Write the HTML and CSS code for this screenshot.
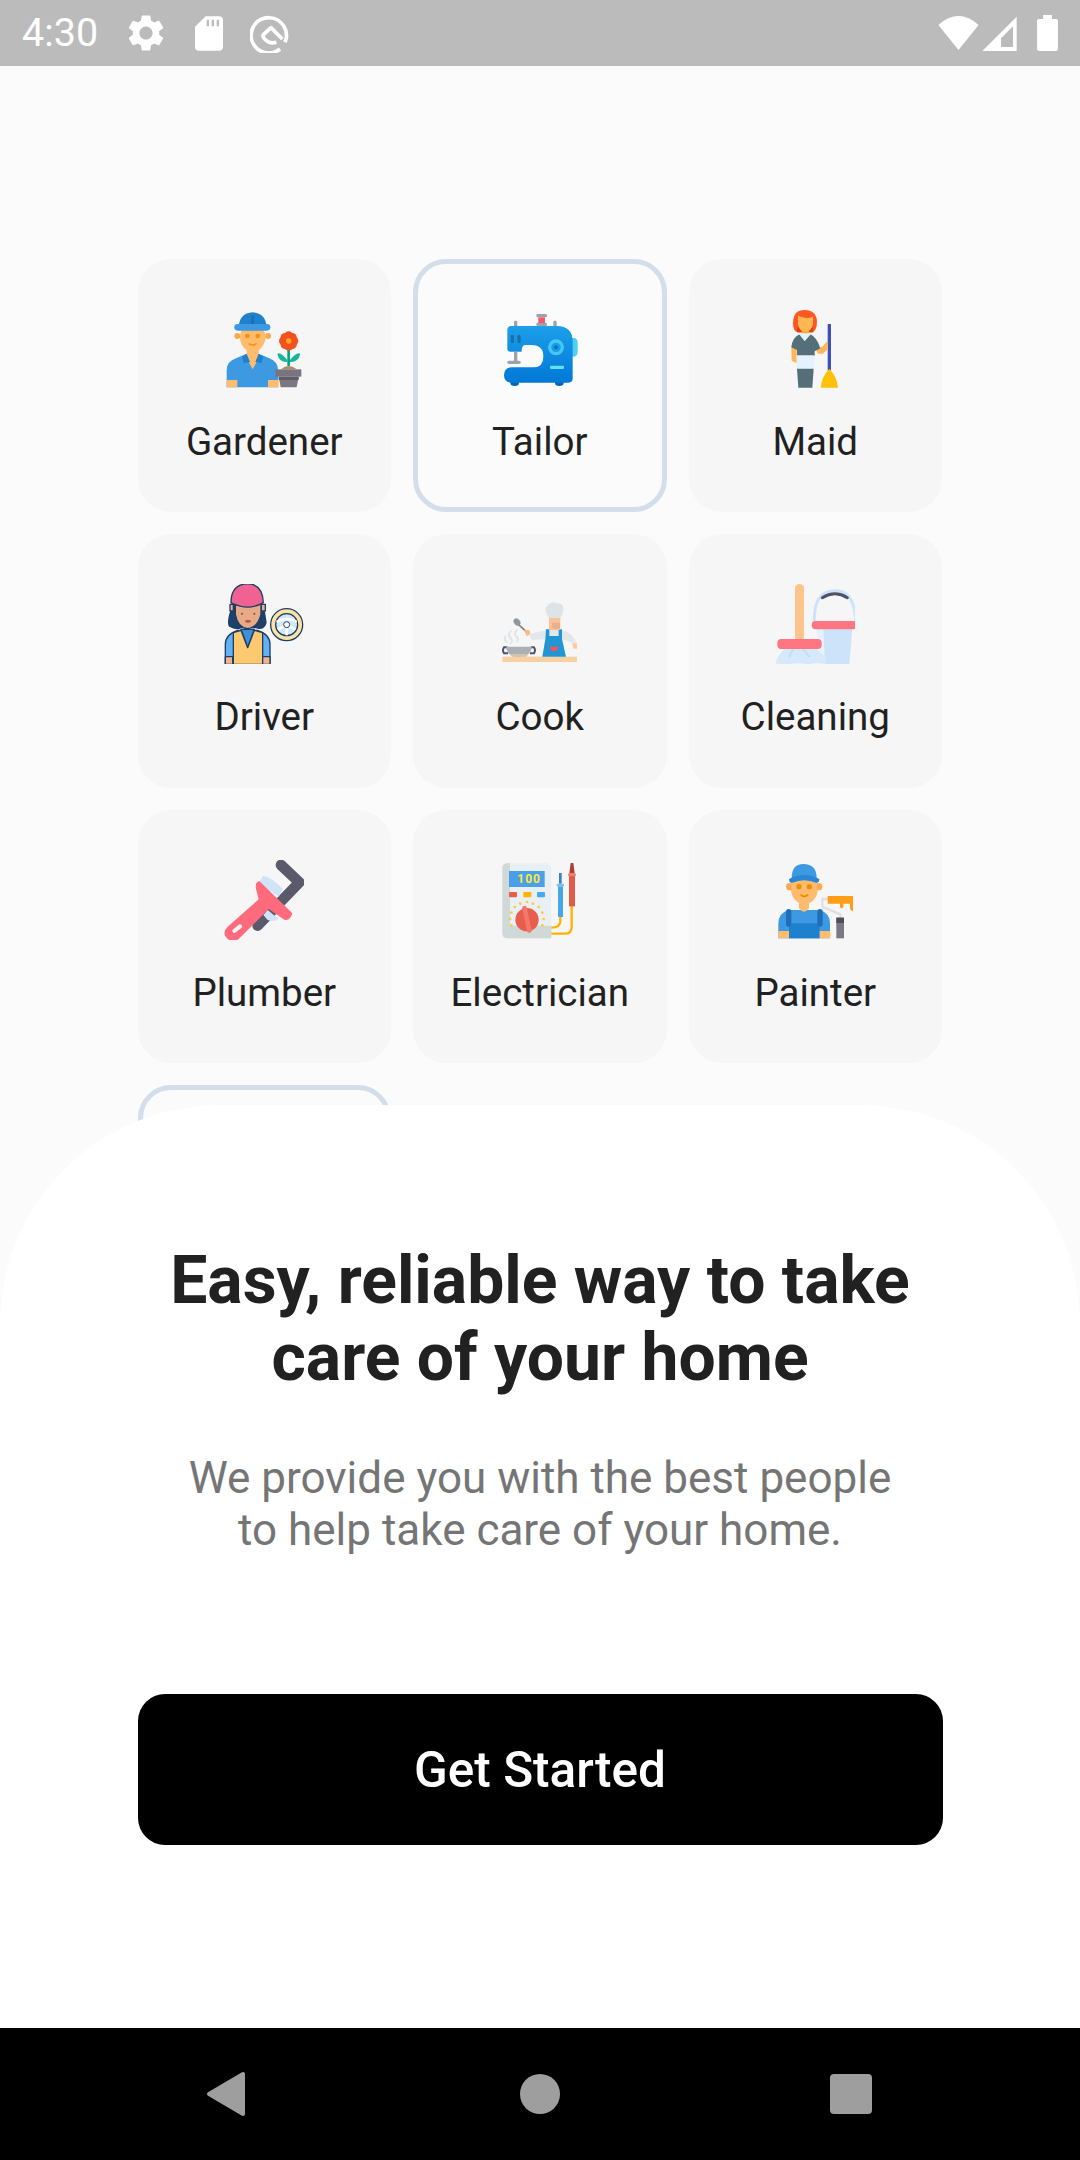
FILE: index.html
```html
<!DOCTYPE html>
<html lang="en">
<head>
<meta charset="utf-8">
<title>Get Started</title>
<link rel="stylesheet" href="styles.css">
</head>
<body>
<div class="phone">
  <header class="status">
    <div class="status-left">
      <span class="time">4:30</span>
      <svg class="st-gear" viewBox="0 0 24 24"><path fill="#fff" d="M19.14 12.94c.04-.3.06-.61.06-.94 0-.32-.02-.64-.07-.94l2.03-1.58a.49.49 0 0 0 .12-.61l-1.92-3.32a.488.488 0 0 0-.59-.22l-2.39.96c-.5-.38-1.03-.7-1.62-.94l-.36-2.54a.484.484 0 0 0-.48-.41h-3.84c-.24 0-.43.17-.47.41l-.36 2.54c-.59.24-1.13.57-1.62.94l-2.39-.96c-.22-.08-.47 0-.59.22L2.74 8.87c-.12.21-.08.47.12.61l2.03 1.58c-.05.3-.09.63-.09.94s.02.64.07.94l-2.03 1.58a.49.49 0 0 0-.12.61l1.92 3.32c.12.22.37.29.59.22l2.39-.96c.5.38 1.03.7 1.62.94l.36 2.54c.05.24.24.41.48.41h3.84c.24 0 .44-.17.47-.41l.36-2.54c.59-.24 1.13-.56 1.62-.94l2.39.96c.22.08.47 0 .59-.22l1.92-3.32c.12-.22.07-.47-.12-.61l-2.01-1.58zM12 15.6c-1.98 0-3.6-1.62-3.6-3.6s1.62-3.6 3.6-3.6 3.6 1.62 3.6 3.6-1.62 3.6-3.6 3.6z"/></svg>
      <svg class="st-sd" viewBox="580 48 84 104"><path fill="#fff" fill-rule="evenodd" d="M612 48H652Q664 48 664 60V140Q664 152 652 152H592Q580 152 580 140V80ZM615 59V78H622V59ZM630 59V78H637V59ZM645 59V78H652V59Z"/></svg>
      <svg class="st-q" viewBox="745 40 120 120"><g fill="none" stroke="#fff" stroke-width="11"><path d="M835 148A53 53 0 1 1 850 128"/><path d="M782 108L808 84L842 118" stroke-linejoin="round"/><path d="M782 106A34 34 0 0 0 824 128"/></g></svg>
    </div>
    <div class="status-right">
      <svg class="st-wifi" viewBox="175 45 122 103"><path fill="#fff" d="M175 72Q236 18 297 72L236 148Z"/></svg>
      <svg class="st-signal" viewBox="307 45 103 105"><path fill="#fff" fill-rule="evenodd" d="M307 150L410 47V150ZM363 138H399V76L363 112Z"/></svg>
      <svg class="st-batt" viewBox="472 45 62 107"><path fill="#fff" d="M490 45H516V57H528Q534 57 534 63V146Q534 152 528 152H478Q472 152 472 146V63Q472 57 478 57H490Z"/></svg>
    </div>
  </header>

  <main class="main">
    <div class="grid">
      <div class="card">
        <svg class="icon" viewBox="284 177 240 240">
          <path fill="#3d9ae2" d="M292 412V360Q292 335 320 325L350 312H390L420 325Q446 335 446 360V412Z"/>
          <path fill="#ffbb6e" d="M292 390H324V412H292ZM416 390H448V412H416ZM352 298H388V325L370 358L352 325Z"/>
          <path fill="#1e81ce" d="M352 311L338 320L344 340L362 336ZM388 311L402 320L396 340L378 336Z"/>
          <circle fill="#ffa94d" cx="324" cy="258" r="9"/><circle fill="#ffa94d" cx="416" cy="258" r="9"/>
          <ellipse fill="#ffbb6e" cx="370" cy="262" rx="38" ry="43"/>
          <circle fill="#f59300" cx="354" cy="258" r="7"/><circle fill="#f59300" cx="385" cy="258" r="7"/>
          <path fill="none" stroke="#f59300" stroke-width="5" stroke-linecap="round" d="M360 282Q370 288 380 282"/>
          <path fill="#1e81ce" d="M328 232Q330 190 370 187Q410 190 412 232Z"/>
          <rect fill="#1a6fb5" x="366" y="196" width="8" height="26"/>
          <rect fill="#3d9ae2" x="315" y="222" width="108" height="20" rx="10"/>
          <path fill="#b08d62" d="M455 358Q478 338 502 358Z"/>
          <rect fill="#00a58c" x="474" y="296" width="8" height="52"/>
          <path fill="#1ab49a" d="M474 330Q452 303 444 312Q450 338 474 336ZM482 330Q504 303 513 312Q506 338 482 336Z"/>
          <g fill="#f4511e"><circle cx="478" cy="258" r="14"/><circle cx="478" cy="288" r="14"/><circle cx="463" cy="273" r="14"/><circle cx="493" cy="273" r="14"/><circle cx="467" cy="262" r="13"/><circle cx="489" cy="262" r="13"/><circle cx="467" cy="284" r="13"/><circle cx="489" cy="284" r="13"/></g>
          <circle fill="#ffa726" cx="478" cy="273" r="8"/>
          <path fill="#7b7884" d="M448 380H508L502 412H454Z"/>
          <rect fill="#5f5c66" x="448" y="380" width="60" height="10"/>
          <rect fill="#797580" x="438" y="358" width="78" height="22"/>
        </svg>
        <span class="label">Gardener</span>
      </div>

      <div class="card selected">
        <svg class="icon" viewBox="300 177 240 240">
          <defs><linearGradient id="tailorBody" x1="0" y1="0" x2="0" y2="1"><stop offset="0" stop-color="#1d9fe9"/><stop offset="1" stop-color="#0078d7"/></linearGradient></defs>
          <g fill="#9aa3ac"><rect x="342" y="212" width="10" height="20" rx="4"/><rect x="460" y="212" width="10" height="20" rx="4"/><rect x="409" y="192" width="32" height="10" rx="4"/><rect x="409" y="218" width="32" height="10" rx="4"/></g>
          <rect fill="#f8556a" x="415" y="202" width="20" height="17"/>
          <path fill="#4dd0f5" d="M505 264H520Q533 264 533 278V305Q533 320 518 320H505Z"/>
          <ellipse fill="#0068b8" cx="344" cy="399" rx="13" ry="9"/><ellipse fill="#0068b8" cx="478" cy="399" rx="13" ry="9"/>
          <path fill="url(#tailorBody)" d="M322 240Q322 228 334 228H470Q518 228 518 275V385Q518 398 505 398H335Q312 398 312 376Q312 352 335 352H400Q430 352 430 320Q430 285 395 285H375Q365 285 365 305H330Q322 305 322 295Z"/>
          <g fill="#9aa3ac"><rect x="342" y="305" width="10" height="28"/><rect x="322" y="332" width="40" height="10" rx="5"/></g>
          <g fill="#1a6fa8"><rect x="332" y="255" width="10" height="24" rx="4"/><rect x="352" y="255" width="10" height="24" rx="4"/></g>
          <circle fill="#42c8f4" cx="468" cy="292" r="24"/><circle fill="#1a9be8" cx="468" cy="292" r="14"/><circle fill="#0a6fc2" cx="468" cy="292" r="6"/>
          <rect fill="#5fe0f5" x="450" y="347" width="42" height="10" rx="4"/>
        </svg>
        <span class="label">Tailor</span>
      </div>

      <div class="card">
        <svg class="icon" viewBox="256 177 240 240">
          <path fill="#ff5722" d="M345 180Q310 180 310 220Q310 245 325 247H365Q382 245 382 215Q380 180 345 180Z"/>
          <rect fill="#d84315" x="322" y="232" width="48" height="15"/>
          <rect fill="#ffa726" x="336" y="240" width="22" height="20"/>
          <path fill="#ffb655" d="M325 196Q345 210 370 200V222Q366 244 347 245Q328 244 325 222Z"/>
          <rect fill="#3f51b5" x="414" y="222" width="10" height="140"/>
          <path fill="#ffc107" d="M419 356Q396 380 393 413H445Q442 380 419 356Z"/>
          <path fill="#ffb655" d="M378 298L398 290L414 272V298L400 311H385ZM305 288H321V340L306 332Z"/>
          <path fill="#546e7a" d="M305 292Q308 262 330 253H362Q382 262 392 295L375 304V318H322V300Z"/>
          <path fill="#e3f2fd" d="M326 250L345 274L366 250ZM321 316H374V356H321Z"/>
          <path fill="#546e7a" d="M322 356H372L368 413H326Z"/>
        </svg>
        <span class="label">Maid</span>
      </div>

      <div class="card">
        <svg class="icon" viewBox="74 44 240 240">
          <g stroke="#1c3f66" stroke-width="4" stroke-linejoin="round">
            <path fill="#1f4068" d="M105 100Q82 150 90 170Q110 182 125 175H170Q195 182 200 160Q198 130 185 100Z"/>
            <path fill="#64b0f4" d="M78 285V225Q78 195 115 183H175Q212 195 212 225V285Z"/>
            <path fill="#3f8fdc" d="M125 180H165L145 235Z"/>
            <path fill="#fdc970" d="M102 190L125 183L145 235L165 183L190 190V285H102Z"/>
            <path fill="#f2b28f" d="M78 262H100V285H78ZM190 262H212V285H190ZM92 105H102V125H92ZM186 105H198V125H186Z"/>
            <path fill="#e8a987" d="M108 100V135Q115 175 145 178Q175 175 185 135V100Z"/>
            <path fill="#f06292" d="M95 100Q95 45 145 43Q190 45 192 100Q150 125 100 103Z"/>
          </g>
          <circle fill="#7a5040" cx="128" cy="133" r="3"/><circle fill="#7a5040" cx="165" cy="133" r="3"/>
          <ellipse fill="#b6503f" cx="146" cy="156" rx="9" ry="4"/>
          <circle fill="#fde2a8" stroke="#1c3f66" stroke-width="4" cx="262" cy="166" r="48"/>
          <circle fill="#d3e9fb" stroke="#1c3f66" stroke-width="4" cx="262" cy="166" r="33"/>
          <path fill="none" stroke="#fff" stroke-width="8" d="M232 158Q262 140 292 158M262 175V198M236 180L255 170M288 180L269 170"/>
          <circle fill="#fff" stroke="#1c3f66" stroke-width="3" cx="262" cy="166" r="9"/>
        </svg>
        <span class="label">Driver</span>
      </div>

      <div class="card">
        <svg class="icon" viewBox="60 -16 240 240">
          <rect fill="#f9d0a0" x="67" y="202" width="224" height="16"/>
          <path fill="none" stroke="#dbe6ec" stroke-width="6" stroke-linecap="round" d="M92 126Q82 136 92 146Q100 155 92 162M110 122Q100 134 110 142Q116 150 112 156M76 142Q72 150 80 158"/>
          <path fill="none" stroke="#4d5470" stroke-width="6" d="M82 174H72Q66 182 72 192H84M152 174H162Q168 182 162 192H150"/>
          <path fill="#aab0b3" d="M78 172H156Q152 202 120 202H112Q82 202 78 172Z"/>
          <path fill="#d5c3b0" d="M90 194H144L140 202H96Z"/>
          <path fill="none" stroke="#7c8488" stroke-width="5" d="M115 105L138 126"/>
          <ellipse fill="#90979c" cx="111" cy="98" rx="9" ry="12" transform="rotate(-40 111 98)"/>
          <path fill="#ffb880" d="M132 122L148 122L152 136L140 140Z"/>
          <path fill="#e2e8ea" d="M146 134L200 122H245Q275 128 290 160H275L250 150V202H195V150L155 152Z"/>
          <path fill="#ffc9a0" d="M276 162H291V178H280Z"/>
          <path fill="#2196d3" d="M198 120H208V140H236V120H246V150L258 202H187L196 150Z"/>
          <path fill="#f2555a" d="M210 172H236Q232 186 222 186Q212 186 210 172Z"/>
          <rect fill="#f8c396" x="207" y="82" width="34" height="40"/>
          <path fill="#eab089" d="M216 100H240V116Q228 124 216 116Z"/>
          <path fill="#dde3e6" d="M207 86Q188 60 203 48Q215 34 228 42Q250 38 250 60Q250 75 241 86Z"/>
        </svg>
        <span class="label">Cook</span>
      </div>

      <div class="card">
        <svg class="icon" viewBox="45 44 240 240">
          <rect fill="#ffc48a" x="105" y="44" width="27" height="170" rx="13"/>
          <path fill="none" stroke="#cde3f9" stroke-width="9" d="M163 158Q160 64 225 64Q285 64 287 158"/>
          <path fill="none" stroke="#4f5166" stroke-width="9" stroke-linecap="round" d="M187 85Q225 62 262 85"/>
          <path fill="#cde3f9" d="M170 178H277L268 285H185Z"/>
          <path fill="#e6f1fb" d="M170 178H190L195 285H185Z"/>
          <rect fill="#ff7582" x="155" y="155" width="136" height="25" rx="12"/>
          <path fill="#d7e8fa" d="M75 238H170L200 270Q198 285 180 282Q160 280 145 285Q110 278 90 285Q65 285 46 282Q50 262 75 238Z"/>
          <path fill="none" stroke="#c0dbf5" stroke-width="5" stroke-linecap="round" d="M100 238L88 262M128 238L148 262"/>
          <rect fill="#ff7582" x="52" y="209" width="133" height="30" rx="12"/>
        </svg>
        <span class="label">Cleaning</span>
      </div>

      <div class="card">
        <svg class="icon" viewBox="74 45 240 240">
          <path fill="none" stroke="#5a5a6c" stroke-width="32" stroke-linecap="round" stroke-linejoin="round" d="M245 60L300 112L175 242"/>
          <path fill="#cfe4f7" d="M190 92Q215 95 250 132L238 155L180 115ZM205 195L238 222Q225 232 205 225L192 210Z"/>
          <path fill="#ff6b7d" d="M180 108Q166 112 170 132L178 163L85 245Q65 265 85 282Q105 297 122 278L208 192L255 224Q272 230 279 205Z"/>
          <path fill="none" stroke="#f6f6f6" stroke-width="12" stroke-linecap="round" d="M105 258L122 244"/>
        </svg>
        <span class="label">Plumber</span>
      </div>

      <div class="card">
        <svg class="icon" viewBox="60 45 240 240">
          <rect fill="#e9f0f3" x="67" y="55" width="147" height="225" rx="15"/>
          <path fill="#d0d8d8" d="M82 55Q67 55 67 70V265Q67 280 82 280H214V242H90V55Z"/>
          <rect fill="#4a9fe8" x="87" y="78" width="107" height="48"/>
          <text class="digits" x="112" y="114">100</text>
          <rect fill="#e85d4d" x="87" y="141" width="24" height="16" rx="3"/>
          <rect fill="#ffb300" x="130" y="141" width="24" height="16" rx="3"/>
          <rect fill="#4aa8ee" x="171" y="141" width="24" height="16" rx="3"/>
          <g fill="#ffc933"><circle cx="104" cy="186" r="4"/><circle cx="121" cy="176" r="4"/><circle cx="141" cy="171" r="4"/><circle cx="159" cy="176" r="4"/><circle cx="176" cy="186" r="4"/><circle cx="187" cy="203" r="4"/><circle cx="191" cy="222" r="4"/><circle cx="187" cy="241" r="4"/><circle cx="94" cy="203" r="4"/><circle cx="90" cy="222" r="4"/><circle cx="94" cy="241" r="4"/></g>
          <circle fill="#e85d4d" cx="141" cy="224" r="35"/>
          <rect fill="#f4786a" x="134" y="182" width="14" height="82" rx="6" transform="rotate(-12 141 224)"/>
          <path fill="none" stroke="#ffb300" stroke-width="7" d="M241 212V228Q241 248 214 248M275 180V245Q275 266 255 266H214"/>
          <rect fill="#45a6e8" x="234" y="124" width="15" height="92"/>
          <rect fill="#7cc0ee" x="230" y="116" width="22" height="9" rx="4"/>
          <path fill="#3a7fc8" d="M237 84H245V116H237Z"/>
          <rect fill="#e05a48" x="267" y="92" width="18" height="92"/>
          <rect fill="#ef7e6e" x="264" y="85" width="24" height="9" rx="4"/>
          <path fill="#b03e32" d="M272 54H280L284 85H268Z"/>
        </svg>
        <span class="label">Electrician</span>
      </div>

      <div class="card">
        <svg class="icon" viewBox="45 45 240 240">
          <path fill="#3d9ae2" d="M55 280V235Q55 205 85 195H180Q210 205 210 235V280Z"/>
          <rect fill="#1e81ce" x="87" y="235" width="92" height="45"/>
          <rect fill="#1e6fb5" x="78" y="192" width="16" height="53" rx="8"/><rect fill="#1e6fb5" x="172" y="192" width="16" height="53" rx="8"/>
          <path fill="#ffbb6e" d="M55 258H87V280H55ZM179 258H211V280H179ZM117 165H147V190Q132 210 117 190Z"/>
          <circle fill="#ffa94d" cx="89" cy="125" r="11"/><circle fill="#ffa94d" cx="176" cy="125" r="11"/>
          <ellipse fill="#ffbb6e" cx="133" cy="132" rx="40" ry="46"/>
          <circle fill="#f08c00" cx="117" cy="125" r="8"/><circle fill="#f08c00" cx="148" cy="125" r="8"/>
          <path fill="none" stroke="#f08c00" stroke-width="5" stroke-linecap="round" d="M123 150Q133 158 143 150"/>
          <path fill="#3d9ae2" d="M95 100Q95 57 130 57Q170 57 170 100Z"/>
          <path fill="#2a86d6" d="M87 102Q133 78 178 102Q178 112 170 114Q133 98 95 114Q87 112 87 102Z"/>
          <path fill="none" stroke="#e0e0e0" stroke-width="7" d="M205 162H187V185L241 208V220"/>
          <rect fill="#7b7884" x="229" y="218" width="23" height="62"/>
          <rect fill="#4d4d55" x="229" y="218" width="23" height="16"/>
          <path fill="#ff9e16" d="M203 153H279V198Q272 200 270 190V176H250V186Q245 194 240 186V176H203Z"/>
        </svg>
        <span class="label">Painter</span>
      </div>

      <div class="card selected"></div>
    </div>

    <section class="sheet">
      <h1 class="title">Easy, reliable way to take<br>care of your home</h1>
      <p class="sub">We provide you with the best people<br>to help take care of your home.</p>
      <button class="cta">Get Started</button>
    </section>
  </main>

  <nav class="navbar">
    <svg class="nav-back" viewBox="0 0 40 46"><path fill="#9e9e9e" stroke="#9e9e9e" stroke-width="4" stroke-linejoin="round" d="M37 3V43L3 23Z"/></svg>
    <span class="nav-home"></span>
    <span class="nav-recent"></span>
  </nav>
</div>
</body>
</html>
```

FILE: styles.css
```css
* { box-sizing: border-box; }
html, body { margin: 0; padding: 0; }
body { font-family: Roboto, "Noto Sans", sans-serif; background: #fbfbfb; }
.phone { width: 1080px; height: 2160px; display: flex; flex-direction: column; overflow: hidden; }

.status { height: 66px; flex: none; background: #bbbbbb; display: flex; justify-content: space-between; align-items: center; padding: 0 22px 0 22px; }
.status-left, .status-right { display: flex; align-items: center; }
.time { color: #fff; font-size: 39.5px; line-height: 66px; width: 102px; }
.st-gear { width: 44px; height: 44px; margin-right: 27px; }
.st-sd { width: 28px; height: 35px; margin-right: 27px; }
.st-q { width: 40px; height: 40px; }
.st-wifi { width: 41px; height: 34px; margin-right: 3px; }
.st-signal { width: 35px; height: 35px; margin-right: 20px; }
.st-batt { width: 21px; height: 36px; }

.main { flex: 1; position: relative; overflow: hidden; }
.grid { display: grid; grid-template-columns: repeat(3, 253.5px); grid-auto-rows: 253.25px; gap: 22px; padding: 193px 0 0 137.5px; }
.card { background: #f6f6f6; border-radius: 33px; display: flex; flex-direction: column; align-items: center; padding-top: 50px; }
.card.selected { background: #fbfbfb; border: 5.5px solid #d3deea; padding-top: 44.5px; }
.icon { width: 80px; height: 80px; flex: none; }
.label { margin-top: 30px; font-size: 38.5px; line-height: 46px; color: #212121; }
.digits { font-family: Roboto, sans-serif; font-weight: 700; font-size: 36px; fill: #ffe93b; letter-spacing: 3px; }

.sheet { position: absolute; left: 0; right: 0; top: 1039px; bottom: 0; background: #fff; border-radius: 220px 220px 0 0; display: flex; flex-direction: column; align-items: center; padding-top: 137px; }
.title { margin: 0; font-size: 66px; line-height: 77px; font-weight: 700; color: #212121; text-align: center; }
.sub { margin: 56px 0 0; font-size: 44px; line-height: 52px; color: #757575; text-align: center; }
.cta { margin-top: 138px; width: 805px; height: 151px; border: 0; border-radius: 27px; background: #000; color: #fff; font-family: Roboto, sans-serif; font-size: 49.5px; font-weight: 500; }

.navbar { height: 132px; flex: none; background: #000; display: flex; align-items: center; position: relative; padding-left: 206px; }
.nav-back { width: 40px; height: 46px; margin-right: 274px; }
.nav-home { width: 40px; height: 40px; border-radius: 50%; background: #9e9e9e; margin-right: 270px; }
.nav-recent { width: 42px; height: 40px; border-radius: 4px; background: #9e9e9e; }
```
